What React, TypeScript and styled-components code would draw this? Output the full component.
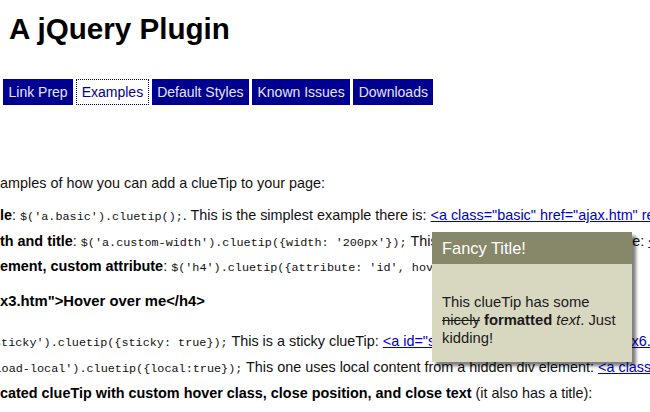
import React from "react";
import styled, { createGlobalStyle } from "styled-components";

const GlobalStyle = createGlobalStyle`
  html, body {
    margin: 0;
    padding: 0;
    background: #fff;
    overflow: hidden;
  }
  body {
    font-family: "Liberation Sans", Arial, sans-serif;
    font-size: 14.4px;
    color: #111;
  }
`;

const Page = styled.div`
  position: relative;
  width: 650px;
  height: 412px;
  overflow: hidden;
  display: flex;
  flex-direction: column;
`;

const Title = styled.h1`
  margin: 0;
  padding: 12px 0 0 9px;
  font-size: 29.6px;
  line-height: 34px;
  font-weight: bold;
  color: #000;
  white-space: nowrap;
`;

const Tabs = styled.ul`
  list-style: none;
  margin: 33px 0 0;
  padding: 0 0 0 3px;
  display: flex;
  gap: 3px;
`;

const Tab = styled.li<{ $active?: boolean }>`
  box-sizing: border-box;
  height: 26px;
  padding: 0 ${(p) => (p.$active ? "4.5px" : "5.5px")};
  line-height: ${(p) => (p.$active ? "24px" : "26px")};
  font-size: 14px;
  white-space: nowrap;
  background: ${(p) => (p.$active ? "#fff" : "#000090")};
  color: ${(p) => (p.$active ? "#000090" : "#e6e6f5")};
  border: ${(p) => (p.$active ? "1px dotted #000060" : "none")};
`;

const Line = styled.div<{ $mt: number; $indent?: number }>`
  margin-top: ${(p) => p.$mt}px;
  line-height: 18px;
  height: 18px;
  white-space: nowrap;
  text-indent: ${(p) => p.$indent ?? 0}px;
`;

const Heading = styled.div<{ $mt: number }>`
  margin-top: ${(p) => p.$mt}px;
  line-height: 18px;
  height: 18px;
  white-space: nowrap;
  font-weight: bold;
  font-size: 14.8px;
  color: #000;
`;

const Strong = styled.strong`
  font-weight: bold;
  color: #000;
`;

const Tight = styled.span`
  word-spacing: -1px;
`;

const Code = styled.code`
  font-family: "Liberation Mono", "Courier New", monospace;
  font-size: 11.8px;
  color: #111;
`;

const Link = styled.a`
  color: #0000cc;
  text-decoration: underline;
`;

const Tip = styled.div`
  position: absolute;
  left: 432px;
  top: 232px;
  width: 200px;
  box-shadow: 4px 4px 3px rgba(0, 0, 0, 0.5);
`;

const TipTitle = styled.div`
  height: 32px;
  line-height: 32px;
  padding: 0 10px;
  background: #878769;
  color: #fff;
  font-size: 16.4px;
`;

const TipBody = styled.div`
  background: #d8d8c1;
  padding: 29px 10px 15px;
  font-size: 14.8px;
  line-height: 18px;
  color: #1a1a1a;
`;

export default function App() {
  return (
    <>
      <GlobalStyle />
      <Page>
        <Title>A jQuery Plugin</Title>
        <Tabs>
          <Tab>Link Prep</Tab>
          <Tab $active>Examples</Tab>
          <Tab>Default Styles</Tab>
          <Tab>Known Issues</Tab>
          <Tab>Downloads</Tab>
        </Tabs>

        <Line $mt={69}>amples of how you can add a clueTip to your page:</Line>

        <Line $mt={14}>
          <Strong>le</Strong>: <Code>$('a.basic').cluetip();</Code>. This is the simplest example there is:{" "}
          <Link href="#">&lt;a class="basic" href="ajax.htm" rel="ajax.htm"&gt;basic&lt;/a&gt;</Link>
        </Line>
        <Line $mt={7.5}>
          <Strong>th and title</Strong>: <Code>$('a.custom-width').cluetip({"{"}width: '200px'{"}"});</Code>{" "}
          <Tight>This one has a custom width and title:</Tight>{" "}
          <Link href="#">&lt;a class="custom-width" href="ajax.htm"&gt;</Link>
        </Line>
        <Line $mt={7.5}>
          <Strong>ement, custom attribute</Strong>:{" "}
          <Code>$('h4').cluetip({"{"}attribute: 'id', hoverClass: 'highlight'{"}"});</Code>
        </Line>

        <Heading $mt={17}>x3.htm"&gt;Hover over me&lt;/h4&gt;</Heading>

        <Line $mt={22} $indent={-6}>
          <Code>sticky').cluetip({"{"}sticky: true{"}"});</Code> This is a sticky clueTip:{" "}
          <Link href="#">&lt;a id="sticky" href="ajax6.htm" rel="ajax6.htm"&gt;</Link>
        </Line>
        <Line $mt={8} $indent={-5.5}>
          <Code>load-local').cluetip({"{"}local:true{"}"});</Code> This one uses local content from a hidden div element:{" "}
          <Link href="#">&lt;a class="load-local" href="#loadme"&gt;</Link>
        </Line>
        <Line $mt={8}>
          <Strong>cated clueTip with custom hover class, close position, and close text</Strong> (it also has a title):
        </Line>

        <Tip>
          <TipTitle>Fancy Title!</TipTitle>
          <TipBody>
            This clueTip has some <s>nicely</s> <b>formatted</b> <i>text</i>. Just kidding!
          </TipBody>
        </Tip>
      </Page>
    </>
  );
}
